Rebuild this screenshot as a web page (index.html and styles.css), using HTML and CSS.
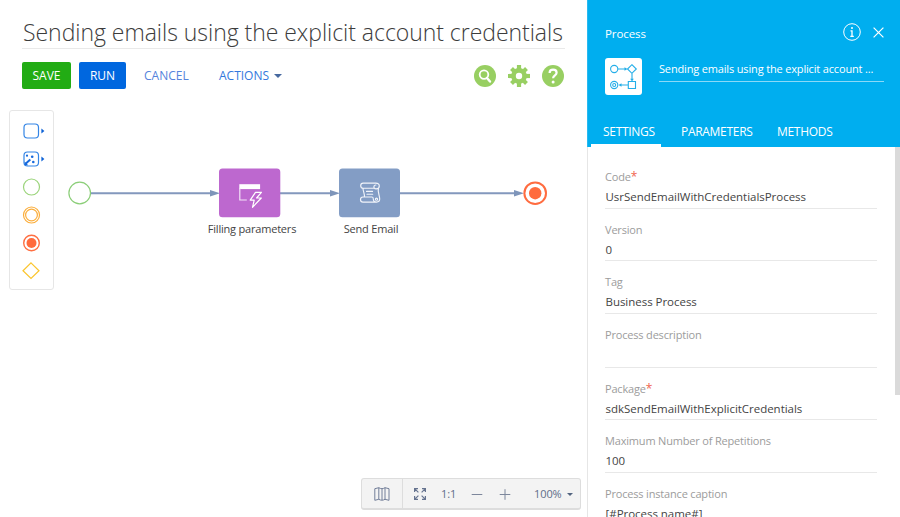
FILE: index.html
```html
<!DOCTYPE html>
<html lang="en">
<head>
<meta charset="utf-8">
<title>Process designer</title>
<link rel="stylesheet" href="styles.css">
</head>
<body>
<div class="app">
  <main class="designer">
    <header class="header">
      <h1 class="title"><span>Sending emails using the explicit account credentials</span></h1>
      <div class="actions">
        <button class="btn save">SAVE</button>
        <button class="btn run">RUN</button>
        <button class="btn link cancel">CANCEL</button>
        <button class="btn link menu">ACTIONS<i class="caret"></i></button>
        <div class="tools">
          <svg width="22" height="22" viewBox="0 0 22 22"><circle cx="11" cy="11" r="11" fill="#98cf62"/><circle cx="10" cy="9.6" r="4.3" fill="none" stroke="#fff" stroke-width="1.8"/><path d="M13 13l3 3.500" stroke="#fff" stroke-width="2.400" stroke-linecap="round"/></svg>
          <svg width="22" height="22" viewBox="0 0 22 22"><g fill="#98cf62"><circle cx="11" cy="11" r="7.900"/><path d="M8.900 0h4.200v22H8.900z"/><path d="M0 8.900h22v4.200H0z"/><g transform="rotate(45 11 11)"><path d="M9 .4h4v21.200H9z"/><path d="M.4 9h21.200v4H.4z"/></g></g><circle cx="11" cy="11" r="3.200" fill="#fff"/></svg>
          <svg width="22" height="22" viewBox="0 0 22 22"><circle cx="11" cy="11" r="11" fill="#98cf62"/><path d="M7.600 8c0-2.200 1.500-3.300 3.500-3.300s3.500 1.200 3.500 3c0 2.600-3.500 2.600-3.500 5.600" fill="none" stroke="#fff" stroke-width="2.200"/><circle cx="11.100" cy="17" r="1.500" fill="#fff"/></svg>
        </div>
      </div>
    </header>
    <section class="canvas">
      <div class="palette">
        <svg width="24" height="18" viewBox="0 0 24 18"><rect x="2" y="2" width="14.500" height="14" rx="3.500" fill="none" stroke="#3485e5" stroke-width="1.200"/><path d="M19.400 6.600v5l3-2.500z" fill="#0d62d6"/></svg>
        <svg width="24" height="18" viewBox="0 0 24 18"><rect x="2" y="2" width="14.500" height="14" rx="3.500" fill="none" stroke="#3485e5" stroke-width="1.200"/><path d="M19.400 6.600v5l3-2.500z" fill="#0d62d6"/><g fill="#1769dc"><circle cx="5" cy="5.700" r="1.100"/><circle cx="10.200" cy="6.800" r="1.300"/><circle cx="11.300" cy="12" r="1.300"/></g><path d="M3.300 14l5-4.500" stroke="#1769dc" stroke-width="2"/><path d="M2.600 11.600v3.600h3.600z" fill="#1769dc"/></svg>
        <svg width="24" height="18" viewBox="0 0 24 18"><circle cx="9.500" cy="9" r="8" fill="none" stroke="#9bd47b" stroke-width="1.200"/></svg>
        <svg width="24" height="18" viewBox="0 0 24 18"><g fill="none" stroke="#fbae3c" stroke-width="1.200"><circle cx="9.500" cy="9" r="8"/><circle cx="9.500" cy="9" r="5.900"/></g></svg>
        <svg width="24" height="18" viewBox="0 0 24 18"><circle cx="9.500" cy="9" r="7.800" fill="none" stroke="#ff6f42" stroke-width="1.400"/><circle cx="9.500" cy="9" r="5" fill="#ff6b3d"/></svg>
        <svg width="24" height="18" viewBox="0 0 24 18"><path d="M9 .9L17 8.700L9 16.500L1 8.700z" fill="none" stroke="#fbc52d" stroke-width="1.200"/></svg>
      </div>
      <svg class="flows" width="587" height="120" viewBox="0 140 587 120">
        <g stroke="#8398bd" stroke-width="2" fill="none"><path d="M91 193.300H211M280 193.300H331M400 193.300H515"/></g>
        <g fill="#7e95ba"><path d="M210 190l10 3.300l-10 3.300zM330 190l10 3.300l-10 3.300zM514 190l10 3.300l-10 3.300z"/></g>
        <circle cx="79.700" cy="193" r="10.800" fill="#fff" stroke="#8bce78" stroke-width="1.200"/>
        <circle cx="535.200" cy="193.200" r="10.800" fill="#fff" stroke="#ff6c40" stroke-width="2"/><circle cx="535.200" cy="193.200" r="6.200" fill="#ff6b3d"/>
        <rect x="219" y="168.600" width="61.300" height="48.600" rx="3.500" fill="#bd68cf"/>
        <rect x="339" y="168.600" width="61" height="48.600" rx="3.500" fill="#839dc5"/>
        <path d="M239.300 184.200h20.800v4.900h-20.800z" fill="#fff"/><path d="M239.800 188v12h7" fill="none" stroke="#f3e2f7" stroke-width="1.200"/>
        <path d="M255.500 192.300l-5.300 7.800h4l-1.700 7.200l8.800-9.300h-4.700l4.800-5.700z" fill="none" stroke="#fff" stroke-width="1.200" stroke-linejoin="round"/>
        <g fill="none" stroke="#f1f4fa" stroke-width="1.150" stroke-linejoin="round" stroke-linecap="round"><path d="M363.200 183.100h12.500c2 0 3.600 1.300 3.600 3s-1.600 2.800-3.200 2.800c-1.300 0-2.200-.9-2.200-1.900 0-1.100.8-2 2-2M374 188.200h-10.800c-1.400 0-2.500-1-2.500-2.500 0-1.400 1-2.600 2.500-2.600M363 188.500c.2 3.300 1.700 5.300 1.500 8.500h-1.500c-1.400 0-2.500 1.100-2.500 2.500s1.100 2.600 2.500 2.600h13M372 197h-7.500M372 197c1 0 1.300.9 1.300 2 0 1.800 1.200 3.100 3.200 3.100s3.200-1.300 3.200-3c0-4-2.300-6.500-1.300-11"/><path d="M366.500 191.400h6M367 194.200h5.700"/><circle cx="376.500" cy="199.200" r="1.100"/></g>
      </svg>
      <span class="caption filling">Filling parameters</span>
      <span class="caption sending">Send Email</span>
      <div class="zoombar">
        <div class="map"><svg width="16" height="14" viewBox="0 0 16 14"><path d="M.8 1.700l4-1v11.600l-4 1zM4.800.7C7 2 9 2 11 .7v11.600c-2 1.200-4.200 1.200-6.200 0M8 1.700v11.500M11 .7l4 1v11.600l-4-1" fill="none" stroke="#737f99" stroke-width="1"/></svg></div>
        <div class="zoom">
          <svg width="12" height="12" viewBox="0 0 12 12"><path d="M.6 4V.6H4M.6.6l3.800 3.800M8 .6h3.400V4M11.400.6L7.600 4.400M.6 8v3.400H4M.6 11.400l3.800-3.800M11.400 8v3.400H8M11.400 11.400L7.600 7.600" stroke="#66738f" stroke-width="1.200" fill="none"/></svg>
          <span class="one">1:1</span>
          <svg class="minus" width="12" height="12" viewBox="0 0 12 12"><path d="M.7 6.500h10.600" stroke="#7d879c"/></svg>
          <svg class="plus" width="12" height="12" viewBox="0 0 12 12"><path d="M.7 6.500h10.600M6 1.200v10.600" stroke="#7d879c"/></svg>
          <span class="pct">100%</span><i class="caret small"></i>
        </div>
      </div>
    </section>
  </main>
  <aside class="panel">
    <header class="panel-head">
      <div class="panel-top"><span class="kind">Process</span>
        <svg width="18" height="18" viewBox="0 0 18 18"><circle cx="9" cy="9" r="8.300" fill="none" stroke="#fff"/><circle cx="9" cy="5.100" r="1" fill="#fff"/><path d="M7.500 7.800H9v5.500M7.300 13.300h3.500" fill="none" stroke="#fff" stroke-width="1.300"/></svg>
        <svg class="close" width="11" height="11" viewBox="0 0 11 11"><path d="M.6.600l9.800 9.800M10.400.600L.6 10.400" stroke="#fff" stroke-width="1.200"/></svg>
      </div>
      <div class="identity">
        <div class="badge"><svg width="37" height="37" viewBox="0 0 37 37"><g fill="none" stroke="#24aee8" stroke-width="1.100"><circle cx="9.200" cy="11" r="3.600"/><path d="M26.900 6.700l4.400 4.300l-4.400 4.300L22.500 11zM13 11h7M27 15.500v6M23.300 23.500h7.200v7h-7.200zM23 27h-7"/><circle cx="9.200" cy="27" r="3.600"/><circle cx="9.200" cy="27" r="1.500"/></g><path d="M19.500 9.300l3 1.700l-3 1.700zM25.200 20.800h3.600l-1.800 2.700zM16.500 25.300l-3 1.700l3 1.700z" fill="#24aee8"/></svg></div>
        <div class="name"><span>Sending emails using the explicit account ...</span></div>
      </div>
      <nav class="tabs"><a class="tab active"><span>SETTINGS</span></a><a class="tab params"><span>PARAMETERS</span></a><a class="tab methods"><span>METHODS</span></a></nav>
    </header>
    <div class="panel-body">
      <div class="fields">
        <div class="field"><label>Code<b>*</b></label><span class="value">UsrSendEmailWithCredentialsProcess</span></div>
        <div class="field short"><label>Version</label><span class="value">0</span></div>
        <div class="field"><label>Tag</label><span class="value">Business Process</span></div>
        <div class="field tall"><label>Process description</label><span class="value"></span></div>
        <div class="field short"><label>Package<b>*</b></label><span class="value">sdkSendEmailWithExplicitCredentials</span></div>
        <div class="field"><label>Maximum Number of Repetitions</label><span class="value">100</span></div>
        <div class="field"><label>Process instance caption</label><span class="value">[#Process name#]</span></div>
      </div>
      <div class="scroll"></div>
    </div>
  </aside>
</div>
</body>
</html>
```
FILE: styles.css
```css
* { box-sizing: border-box; }
body { margin: 0; overflow: hidden; background: #fff; font-family: "Open Sans", "Noto Sans", sans-serif; font-size: 11.5px; color: #444; }
svg { display: block; flex: none; }
span, label { white-space: nowrap; }
.app { display: flex; width: 900px; height: 517px; overflow: hidden; }
.designer { width: 587px; display: flex; flex-direction: column; }
.header { padding: 14px 22px 0; height: 90px; flex: none; }
.title { margin: 0; height: 35px; padding-left: 1px; border-bottom: 1px solid #e9e9e9; font-size: 23px; line-height: 36px; font-weight: 300; letter-spacing: -0.04px; color: #3c3c3c; white-space: nowrap; }
.actions { display: flex; height: 27px; margin-top: 13px; align-items: center; }
.btn { border: 0; padding: 0; height: 27px; border-radius: 2px; font: 12px/27px "Open Sans", sans-serif; color: #fff; }
.save { width: 49px; background: #22ac14; }
.run { width: 47px; margin-left: 8px; background: #0067df; }
.link { background: none; color: #5583dc; text-align: left; }
.cancel { margin-left: 18px; width: 50px; }
.menu { margin-left: 25px; display: flex; align-items: center; color: #3478dd; }
.caret { width: 0; height: 0; border: 4px solid transparent; border-top-color: #47699f; border-bottom: 0; margin-left: 5px; }
.caret.small { border-width: 3px 3px 0; border-top-color: #536480; margin-left: 6px; }
.tools { margin: 0 1px 0 auto; display: flex; gap: 12px; }
.canvas { position: relative; height: 427px; }
.palette { position: absolute; z-index: 1; left: 9px; top: 20px; width: 45px; height: 180px; border: 1px solid #e6e6e6; border-radius: 3px; background: #fff; padding: 11px 0 0 12px; display: flex; flex-direction: column; gap: 10px; }
.flows { position: absolute; left: 0; top: 50px; }
.caption { position: absolute; top: 131px; line-height: 16px; width: 120px; text-align: center; font-size: 11px; letter-spacing: -0.2px; }
.filling { left: 192px; }
.sending { left: 311px; }
.zoombar { position: absolute; left: 361px; top: 388px; width: 220px; height: 32px; display: flex; background: #f3f3f3; border: 1px solid #ddd; border-bottom-width: 2px; border-radius: 3px; color: #606e88; font-size: 11px; letter-spacing: -0.1px; }
.map { width: 41px; border-right: 1px solid #ddd; display: flex; align-items: center; justify-content: center; }
.zoom { display: flex; align-items: center; padding-left: 11px; }
.one { margin-left: 15px; width: 14px; }
.minus { margin-left: 16px; }
.plus { margin-left: 16px; }
.pct { margin-left: 23px; }
.caret.small { margin-left: 5px; margin-top: 2px; }
.panel { width: 313px; border-left: 1px solid #e6e6e6; display: flex; flex-direction: column; }
.panel-head { height: 147px; flex: none; background: #00aeef; color: #fff; margin-left: -1px; border-left: 1px solid #28b9f0; display: flex; flex-direction: column; }
.panel-top { display: flex; align-items: center; height: 18px; margin: 23px 16px 0 17px; font-size: 11.5px; letter-spacing: -0.1px; }
.kind { margin-right: auto; padding-top: 3px; }
.close { margin-left: 12px; }
.identity { display: flex; margin: 17px 16px 0 17px; height: 37px; }
.badge { width: 37px; height: 37px; border-radius: 3px; background: #fff; margin-right: 17px; }
.name { height: 24px; flex: 1; border-bottom: 1px solid #8bd9f7; line-height: 22px; font-size: 11px; letter-spacing: -0.16px; }
.tabs { margin: auto 0 0 3px; display: flex; height: 30px; font-size: 12px; line-height: 29px; letter-spacing: -0.3px; }
.tab { height: 30px; }
.active { width: 70px; padding-left: 12px; border-bottom: 3px solid #fff; }
.params { margin-left: 20px; width: 71px; }
.methods { margin-left: 25px; }
.panel-body { flex: 1; display: flex; min-height: 0; }
.fields { width: 272px; margin: 9px 0 0 17px; flex: none; }
.field { height: 53px; border-bottom: 1px solid #e8e8e8; padding-top: 11px; display: flex; flex-direction: column; }
.field.short { height: 52px; }
.field.tall { height: 54px; }
.field label { height: 19px; line-height: 19px; font-size: 11px; letter-spacing: -0.18px; color: #9c9c9c; }
.field b { color: #f06450; font-weight: 400; font-size: 12px; }
.value { padding-left: 0.5px; line-height: 22px; height: 22px; font-size: 11.5px; letter-spacing: -0.03px; }
.scroll { width: 5px; height: 248px; margin-left: auto; background: #dadada; }
```
